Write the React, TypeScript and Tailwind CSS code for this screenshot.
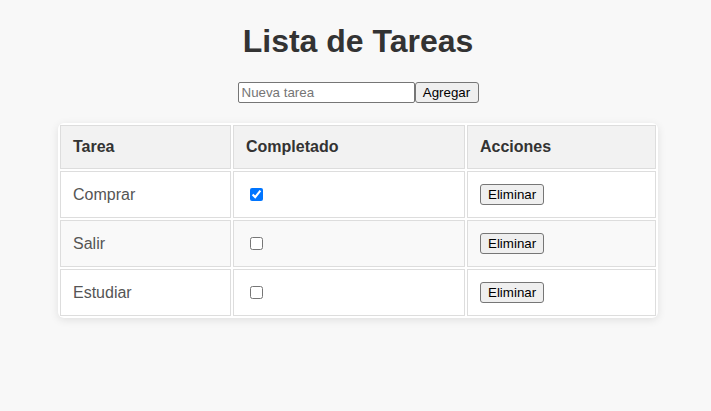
import { useState } from 'react';

interface Task {
  id: number;
  name: string;
  done: boolean;
}

const INITIAL_TASKS: Task[] = [
  { id: 1, name: 'Comprar', done: true },
  { id: 2, name: 'Salir', done: false },
  { id: 3, name: 'Estudiar', done: false },
];

export default function App() {
  const [tasks, setTasks] = useState<Task[]>(INITIAL_TASKS);
  const [newTask, setNewTask] = useState('');

  const addTask = () => {
    if (!newTask.trim()) return;
    setTasks([...tasks, { id: Date.now(), name: newTask.trim(), done: false }]);
    setNewTask('');
  };

  const toggleTask = (id: number) => {
    setTasks(tasks.map((t) => (t.id === id ? { ...t, done: !t.done } : t)));
  };

  const removeTask = (id: number) => {
    setTasks(tasks.filter((t) => t.id !== id));
  };

  return (
    <div className="min-h-screen bg-[#f8f8f8] font-['Liberation_Sans',Arial,sans-serif] pt-[23px] pl-[5px]">
      <h1 className="text-center text-[32px] leading-[37px] font-bold text-[#333]">Lista de Tareas</h1>

      {/* Add form */}
      <div className="mt-[22px] flex justify-center">
        <input
          type="text"
          placeholder="Nueva tarea"
          value={newTask}
          onChange={(e) => setNewTask(e.target.value)}
          className="w-[177px] h-[21px] bg-white border border-[#767676] rounded-[2px] px-[3px] text-[13.33px] text-black placeholder-[#757575] outline-none"
        />
        <button
          onClick={addTask}
          className="h-[21px] w-[64px] bg-[#efefef] border border-[#767676] rounded-[3px] text-[13.33px] text-black"
        >
          Agregar
        </button>
      </div>

      {/* Tasks table */}
      <div className="mt-[20px] flex justify-center">
        <table className="w-[600px] table-fixed border-separate border-spacing-[2px] bg-white rounded-[6px] shadow-[0_2px_8px_rgba(0,0,0,0.1)] text-[16px] leading-[18px]">
          <thead>
            <tr>
              <th className="w-[171px] bg-[#f2f2f2] border border-[#ddd] p-[12px] text-left font-bold text-[#333]">Tarea</th>
              <th className="w-[232px] bg-[#f2f2f2] border border-[#ddd] p-[12px] text-left font-bold text-[#333]">Completado</th>
              <th className="bg-[#f2f2f2] border border-[#ddd] p-[12px] text-left font-bold text-[#333]">Acciones</th>
            </tr>
          </thead>
          <tbody>
            {tasks.map((task, i) => (
              <tr key={task.id} className={i % 2 === 1 ? 'bg-[#f9f9f9]' : 'bg-white'}>
                <td className="border border-[#ddd] p-[12px] text-[#555]">{task.name}</td>
                <td className="border border-[#ddd] p-[12px]">
                  <input
                    type="checkbox"
                    checked={task.done}
                    onChange={() => toggleTask(task.id)}
                    className="m-[3px_3px_3px_4px] w-[13px] h-[13px] align-middle"
                  />
                </td>
                <td className="border border-[#ddd] p-[12px]">
                  <button
                    onClick={() => removeTask(task.id)}
                    className="h-[21px] px-[7px] bg-[#efefef] border border-[#767676] rounded-[3px] text-[13.33px] leading-[15px] text-black align-middle"
                  >
                    Eliminar
                  </button>
                </td>
              </tr>
            ))}
          </tbody>
        </table>
      </div>
    </div>
  );
}
